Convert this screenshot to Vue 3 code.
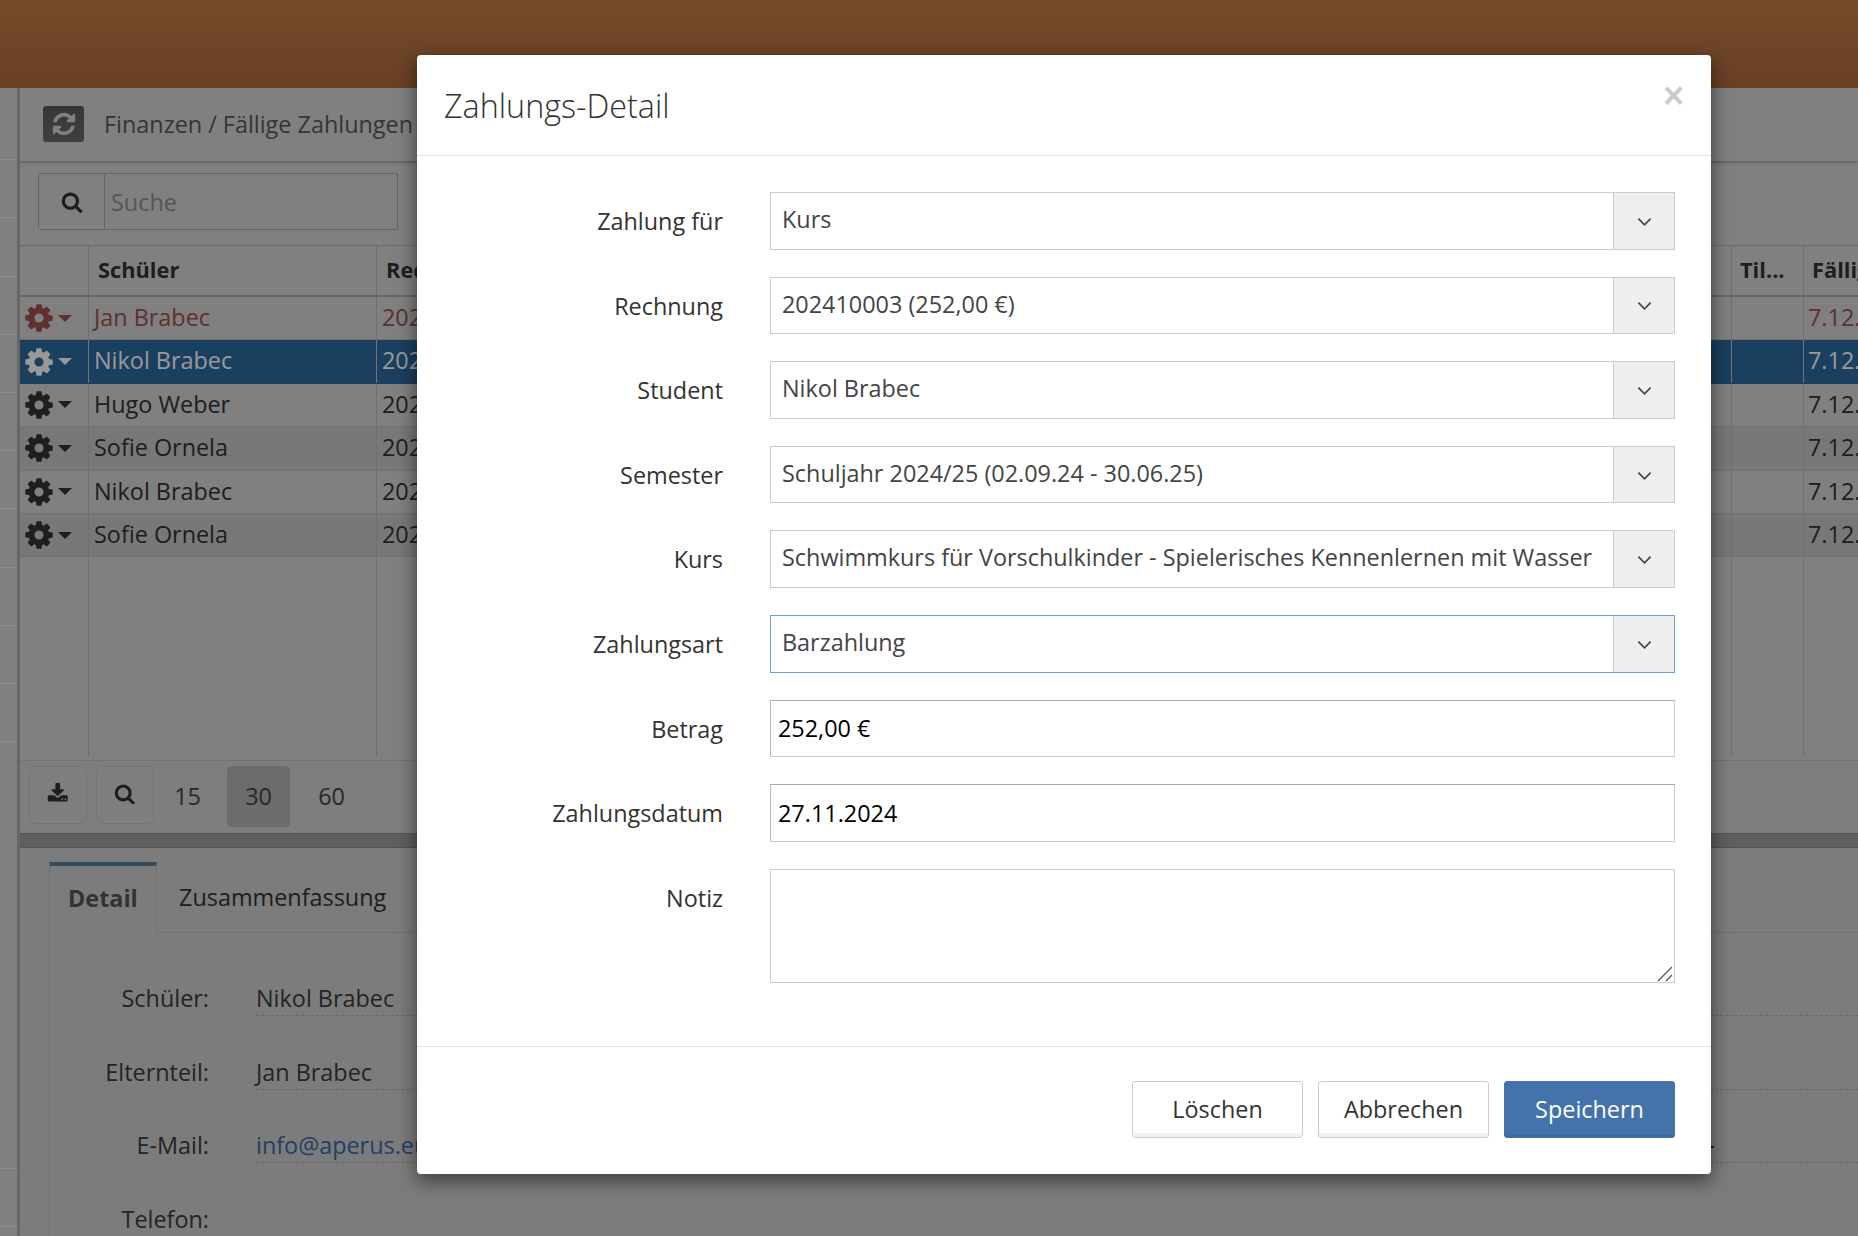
<script setup>
const cog = "M1152 896q0-106-75-181t-181-75-181 75-75 181 75 181 181 75 181-75 75-181zm512-109v222q0 12-8 23t-20 13l-185 28q-19 54-39 91 35 50 107 138 10 12 10 25t-9 23q-27 37-99 108t-94 71q-12 0-26-9l-138-108q-44 23-91 38-16 136-29 186-7 28-36 28h-222q-14 0-24.5-8.5t-11.5-21.5l-28-184q-49-16-90-37l-141 107q-10 9-25 9-14 0-25-11-126-114-165-168-7-10-7-23 0-12 8-23 15-21 51-66.5t54-70.5q-27-50-41-99l-183-27q-13-2-21-12.5t-8-23.5v-222q0-12 8-23t19-13l186-28q14-46 39-92-40-57-107-138-10-12-10-24 0-10 9-23 26-36 98.5-107.5t94.5-71.5q13 0 26 10l138 107q44-23 91-38 16-136 29-186 7-28 36-28h222q14 0 24.5 8.5t11.5 21.5l28 184q49 16 90 37l142-107q9-9 24-9 13 0 25 10 129 119 165 170 7 8 7 22 0 12-8 23-15 21-51 66.5t-54 70.5q26 50 41 98l183 28q13 2 21 12.5t8 23.5z";
const search = "M1216 832q0-185-131.5-316.5t-316.5-131.5-316.5 131.5-131.5 316.5 131.5 316.5 316.5 131.5 316.5-131.5 131.5-316.5zm512 832q0 52-38 90t-90 38q-54 0-90-38l-343-342q-179 124-399 124-143 0-273.5-55.5t-225-150-150-225-55.5-273.5 55.5-273.5 150-225 225-150 273.5-55.5 273.5 55.5 225 150 150 225 55.5 273.5q0 220-124 399l343 343q37 37 37 90z";
const refresh = "M1639 1056q0 5-1 7-64 268-268 434.5t-478 166.5q-146 0-282.5-55t-243.5-157l-129 129q-19 19-45 19t-45-19-19-45v-448q0-26 19-45t45-19h448q26 0 45 19t19 45-19 45l-137 137q71 66 161 102t187 36q134 0 250-65t186-179q11-17 53-117 8-23 30-23h192q13 0 22.5 9.5t9.5 22.5zm25-800v448q0 26-19 45t-45 19h-448q-26 0-45-19t-19-45 19-45l138-138q-148-137-349-137-134 0-250 65t-186 179q-11 17-53 117-8 23-30 23h-199q-13 0-22.5-9.5t-9.5-22.5v-7q65-268 270-434.5t480-166.5q146 0 284 55.5t245 156.5l130-129q19-19 45-19t45 19 19 45z";
const download = "M1344 1344q0-26-19-45t-45-19-45 19-19 45 19 45 45 19 45-19 19-45zm256 0q0-26-19-45t-45-19-45 19-19 45 19 45 45 19 45-19 19-45zm128-224v320q0 40-28 68t-68 28h-1472q-40 0-68-28t-28-68v-320q0-40 28-68t68-28h465l135 136q58 56 136 56t136-56l136-136h464q40 0 68 28t28 68zm-325-569q17 41-14 70l-448 448q-18 19-45 19t-45-19l-448-448q-31-29-14-70 17-39 59-39h256v-448q0-26 19-45t45-19h256q26 0 45 19t19 45v448h256q42 0 59 39z";

const rows = [
  { name: "Jan Brabec", cls: "overdue" },
  { name: "Nikol Brabec", cls: "selected" },
  { name: "Hugo Weber", cls: "" },
  { name: "Sofie Ornela", cls: "striped" },
  { name: "Nikol Brabec", cls: "" },
  { name: "Sofie Ornela", cls: "striped" },
];
const details = [
  { label: "Schüler:", value: "Nikol Brabec" },
  { label: "Elternteil:", value: "Jan Brabec" },
  { label: "E-Mail:", value: "info@aperus.eu", link: true, tail: "-" },
  { label: "Telefon:", value: "" },
];
const selects = [
  { label: "Zahlung für", value: "Kurs" },
  { label: "Rechnung", value: "202410003 (252,00 €)" },
  { label: "Student", value: "Nikol Brabec" },
  { label: "Semester", value: "Schuljahr 2024/25 (02.09.24 - 30.06.25)" },
  { label: "Kurs", value: "Schwimmkurs für Vorschulkinder - Spielerisches Kennenlernen mit Wasser" },
  { label: "Zahlungsart", value: "Barzahlung", focused: true },
];
const sideTop = Array.from({ length: 11 });
const sideBottom = Array.from({ length: 2 });
</script>

<template>
  <div class="page">
    <header class="topbar"></header>
    <div class="main">
      <aside class="side">
        <div v-for="(s, i) in sideTop" :key="i" class="side-item"></div>
        <div class="side-gap"></div>
        <div v-for="(s, i) in sideBottom" :key="'b' + i" class="side-item"></div>
      </aside>
      <section class="content">
        <div class="crumb">
          <button class="refresh"><svg viewBox="0 0 1792 1792" class="ic-refresh"><path :d="refresh" /></svg></button>
          <span class="crumb-text">Finanzen / Fällige Zahlungen</span>
        </div>
        <div class="searchbar">
          <div class="search-box">
            <span class="search-btn"><svg viewBox="0 0 1792 1792" class="ic-search"><path :d="search" /></svg></span>
            <span class="search-ph">Suche</span>
          </div>
        </div>
        <div class="grid head">
          <div class="cell"></div>
          <div class="cell">Schüler</div>
          <div class="cell">Rechnung</div>
          <div class="cell">Til...</div>
          <div class="cell">Fällig am</div>
        </div>
        <div class="body">
          <div v-for="(r, i) in rows" :key="i" class="grid row" :class="r.cls">
            <div class="cell act">
              <svg viewBox="0 0 1792 1792" class="ic-cog"><path :d="cog" /></svg>
              <span class="caret"></span>
            </div>
            <div class="cell">{{ r.name }}</div>
            <div class="cell">202410003</div>
            <div class="cell"></div>
            <div class="cell">7.12.2024</div>
          </div>
          <div class="grid filler">
            <div class="cell"></div><div class="cell"></div><div class="cell"></div><div class="cell"></div><div class="cell"></div>
          </div>
        </div>
        <div class="pager">
          <button class="tool"><svg viewBox="0 0 1792 1792" class="ic-tool"><path :d="download" /></svg></button>
          <button class="tool"><svg viewBox="0 0 1792 1792" class="ic-tool"><path :d="search" /></svg></button>
          <span class="size first">15</span>
          <span class="size active">30</span>
          <span class="size">60</span>
        </div>
        <div class="splitter"></div>
        <div class="tabs">
          <div class="tab active">Detail</div>
          <div class="tab rest">Zusammenfassung</div>
        </div>
        <div class="detail">
          <div v-for="d in details" :key="d.label" class="detail-row">
            <span class="detail-label">{{ d.label }}</span>
            <span class="detail-value" :class="{ link: d.link }">
              {{ d.value }}
              <span v-if="d.tail" class="detail-tail">{{ d.tail }}</span>
            </span>
          </div>
        </div>
      </section>
    </div>

    <div class="backdrop"></div>

    <div class="modal">
      <div class="modal-head">
        <h4 class="modal-title">Zahlungs-Detail</h4>
        <span class="close">×</span>
      </div>
      <div class="modal-body">
        <div v-for="s in selects" :key="s.label" class="field">
          <label class="field-label">{{ s.label }}</label>
          <div class="select" :class="{ focused: s.focused }">
            <span class="select-text">{{ s.value }}</span>
            <span class="select-btn">
              <svg viewBox="0 0 16 10" class="chev"><path d="M1.5 1.5 L8 8 L14.5 1.5" /></svg>
            </span>
          </div>
        </div>
        <div class="field">
          <label class="field-label">Betrag</label>
          <input class="input" value="252,00 €" />
        </div>
        <div class="field">
          <label class="field-label">Zahlungsdatum</label>
          <input class="input" value="27.11.2024" />
        </div>
        <div class="field last">
          <label class="field-label">Notiz</label>
          <div class="area-wrap">
            <textarea class="textarea"></textarea>
            <svg class="grip" viewBox="0 0 16 16"><path d="M1 15 L15 1 M9 15 L15 9" /></svg>
          </div>
        </div>
      </div>
      <div class="modal-foot">
        <button class="btn">Löschen</button>
        <button class="btn">Abbrechen</button>
        <button class="btn primary">Speichern</button>
      </div>
    </div>
  </div>
</template>

<style>
html, body { margin: 0; padding: 0; overflow: hidden; }
</style>

<style scoped>
.page {
  position: relative;
  width: 1858px;
  height: 1236px;
  overflow: hidden;
  background: #d5d5d5;
  font-family: "Open Sans", "Noto Sans", sans-serif;
  font-size: 23.4px;
  color: #333;
}
.topbar {
  height: 88px;
  background: linear-gradient(#c27d48, #b06b3a);
}
.main { display: flex; height: 1148px; }
.side {
  width: 17px;
  flex: none;
  border-right: 3px solid #aaa;
  overflow: hidden;
  padding-top: 14px;
  box-sizing: content-box;
}
.side-item { height: 57.2px; border-bottom: 1px solid #ebebeb; }
.side-gap { height: 369px; }
.content { flex: 1; min-width: 0; overflow: hidden; display: flex; flex-direction: column; }
.crumb {
  height: 73px;
  flex: none;
  display: flex;
  align-items: center;
  padding-left: 23px;
  gap: 20px;
  box-shadow: 0 1px 3px rgba(0,0,0,.35);
  position: relative;
}
.refresh {
  width: 41px;
  height: 36px;
  border: 0;
  border-radius: 3px;
  background: linear-gradient(#5a5a5a, #6c6c6c);
  display: flex;
  align-items: center;
  justify-content: center;
  padding: 0;
  margin-top: -2px;
}
.ic-refresh { width: 26px; height: 26px; fill: #d5d5d5; }
.crumb-text { color: #5a5a5a; line-height: 30px; margin-top: -2px; }
.searchbar { height: 84px; flex: none; box-sizing: border-box; padding: 12px 0 0 18px; }
.search-box {
  width: 360px;
  height: 57px;
  box-sizing: border-box;
  display: flex;
  border: 1px solid #a8a8a8;
  border-radius: 3px 0 0 3px;
}
.search-btn {
  width: 66px;
  box-sizing: border-box;
  border-right: 1px solid #a8a8a8;
  box-shadow: inset 0 -4px 0 #dcdcdc;
  display: flex;
  align-items: center;
  justify-content: center;
}
.ic-search { width: 22px; height: 22px; fill: #333; }
.search-ph { color: #909090; padding-left: 6px; line-height: 57px; }
.grid { display: grid; grid-template-columns: 69px 288px 1355px 72px 60px; }
.head {
  height: 52px;
  flex: none;
  box-sizing: border-box;
  border-top: 1px solid #b5b5b5;
  border-bottom: 2px solid #aaa;
  font-weight: 700;
  font-size: 21.8px;
}
.head .cell { line-height: 48px; padding-left: 9px; }
.head .cell:last-child { padding-left: 8px; }
.head .cell:nth-child(4) { padding-left: 8px; }
.cell {
  box-sizing: border-box;
  border-right: 1px solid #b9b9b9;
  white-space: nowrap;
  overflow: hidden;
  padding-left: 5px;
  min-width: 0;
}
.row .cell:last-child { padding-left: 4px; }
.body { height: 463px; flex: none; display: flex; flex-direction: column; }
.row {
  height: 43.4px;
  flex: none;
  line-height: 41px;
  box-sizing: border-box;
  border-bottom: 1px solid #c0c0c0;
}
.row.striped { background: #c8c8c8; }
.row.overdue { color: #a05050; }
.row.selected { background: #2d699e; color: #fff; border-bottom-color: #2d699e; }
.row.selected .cell { border-right-color: #c0c0c0; }
.filler { flex: 1; margin-bottom: 3px; }
.row .act { display: flex; align-items: center; padding-left: 3px; gap: 3px; }
.ic-cog { width: 32px; height: 32px; fill: currentColor; flex: none; }
.caret {
  width: 0;
  height: 0;
  border-left: 7px solid transparent;
  border-right: 7px solid transparent;
  border-top: 7px solid currentColor;
}
.pager {
  height: 73px;
  flex: none;
  box-sizing: border-box;
  border-top: 1px solid #c0c0c0;
  background: #d2d2d2;
  display: flex;
  align-items: flex-start;
  padding: 5px 0 0 9px;
}
.tool {
  width: 58px;
  height: 58px;
  box-sizing: border-box;
  border: 1px solid #c2c2c2;
  border-radius: 7px;
  background: transparent;
  padding: 0 1px 3px 0;
  margin-right: 9px;
  display: flex;
  align-items: center;
  justify-content: center;
}
.ic-tool { width: 21.5px; height: 21.5px; fill: #333; }
.size { width: 63px; height: 61px; line-height: 61px; text-align: center; color: #444; border-radius: 4px; margin-right: 10px; }
.size.first { margin-left: -7px; margin-right: 8px; }
.size.active { background: #b4b4b4; }
.splitter {
  height: 15px;
  flex: none;
  box-sizing: border-box;
  background: #9e9e9e;
  border-top: 1px solid #8c8c8c;
  border-bottom: 1px solid #8c8c8c;
}
.tabs {
  height: 85px;
  flex: none;
  box-sizing: border-box;
  display: flex;
  align-items: flex-end;
  padding-left: 29px;
  background: #cfcfcf;
}
.tab { height: 71px; box-sizing: border-box; line-height: 70px; padding: 0 21px 0 22px; color: #333; }
.tab.rest { flex: 1; border-bottom: 1px solid #bcbcbc; }
.tab.active {
  width: 108px;
  flex: none;
  padding-left: 18px;
  padding-right: 0;
  line-height: 65px;
  font-weight: 700;
  color: #555;
  border-top: 4px solid #5f7f9a;
  border-left: 1px solid #bcbcbc;
  border-right: 1px solid #bcbcbc;
  height: 72px;
  margin-bottom: -1px;
  position: relative;
}
.detail {
  margin-left: 29px;
  border-left: 1px solid #bcbcbc;
  flex: 1;
  padding-top: 26px;
  background: #cfcfcf;
  box-shadow: -29px 0 0 #cfcfcf;
}
.detail-row { display: flex; height: 73.7px; align-items: flex-start; }
.detail-label { width: 159px; flex: none; text-align: right; padding-top: 23px; line-height: 32px; color: #3c3c3c; }
.detail-value {
  margin-left: 47px;
  flex: 1;
  padding-top: 23px;
  line-height: 32px;
  height: 57px;
  box-sizing: border-box;
  border-bottom: 1px dashed #adadad;
  color: #3c3c3c;
  display: flex;
}
.detail-value.link { color: #3a6ba8; }
.detail-tail { margin-left: 1279px; color: #111; }

.backdrop { position: absolute; inset: 0; background: rgba(0,0,0,.4); }

.modal {
  position: absolute;
  left: 417px;
  top: 55px;
  width: 1294px;
  height: 1119px;
  box-sizing: border-box;
  background: #fff;
  border-radius: 4px;
  box-shadow: 0 6px 20px rgba(0,0,0,.55);
  display: flex;
  flex-direction: column;
}
.modal-head {
  height: 101px;
  flex: none;
  box-sizing: border-box;
  border-bottom: 1px solid #e5e5e5;
  display: flex;
  align-items: flex-start;
  justify-content: space-between;
  padding: 0 27px;
}
.modal-title {
  margin: 0;
  font-weight: 300;
  font-size: 32.3px;
  line-height: 44px;
  padding-top: 28px;
  color: #333;
}
.close {
  font-weight: 700;
  font-size: 36px;
  line-height: 34px;
  padding-top: 24px;
  color: #ccc;
  font-family: "Liberation Sans", sans-serif;
}
.modal-body { flex: 1; box-sizing: border-box; padding: 36px 36px 0 0; display: flex; flex-direction: column; gap: 27px; }
.field { display: flex; height: 57.6px; flex: none; }
.field.last { height: 114px; }
.field-label { width: 306px; flex: none; text-align: right; line-height: 58px; margin-right: 47px; color: #333; }
.select {
  flex: 1;
  min-width: 0;
  display: flex;
  box-sizing: border-box;
  border: 1px solid #ccc;
}
.select.focused { border-color: #6d9eda; }
.select-text { flex: 1; padding-left: 11px; line-height: 52px; color: #444; white-space: nowrap; overflow: hidden; }
.select-btn {
  width: 61px;
  flex: none;
  box-sizing: border-box;
  background: #eee;
  border-left: 1px solid #ccc;
  padding-top: 2px;
  display: flex;
  align-items: center;
  justify-content: center;
}
.chev { width: 15px; height: 10px; fill: none; stroke: #444; stroke-width: 1.8; }
.input, .textarea {
  flex: 1;
  min-width: 0;
  box-sizing: border-box;
  border: 1px solid #ccc;
  border-top-color: #a9a9a9;
  border-left-color: #bbb;
  font-family: inherit;
  font-size: 23.4px;
  color: #000;
  padding: 0 7px;
  outline: none;
  background: #fff;
  border-radius: 0;
  margin: 0;
}
.area-wrap { flex: 1; min-width: 0; position: relative; display: flex; }
.textarea { border-top-color: #ccc; border-left-color: #ccc; resize: none; height: 114px; }
.grip { position: absolute; right: 2px; bottom: 1px; width: 16px; height: 16px; fill: none; stroke: #555; stroke-width: 1.2; }
.modal-foot {
  height: 128px;
  flex: none;
  box-sizing: border-box;
  border-top: 1px solid #e5e5e5;
  display: flex;
  justify-content: flex-end;
  gap: 15px;
  padding: 34px 36px 36px 0;
}
.btn {
  width: 171px;
  height: 57px;
  box-sizing: border-box;
  font-family: inherit;
  font-size: 23.4px;
  color: #333;
  background: #fff;
  border: 1px solid #ccc;
  box-shadow: inset 0 -4px 0 #f2f2f2;
  border-radius: 3px;
  padding: 0 0 2px;
}
.btn.primary { background: #4472aa; color: #fff; border: 1px solid #4472aa; box-shadow: inset 0 -2px 0 #3f6a9f; }
</style>
